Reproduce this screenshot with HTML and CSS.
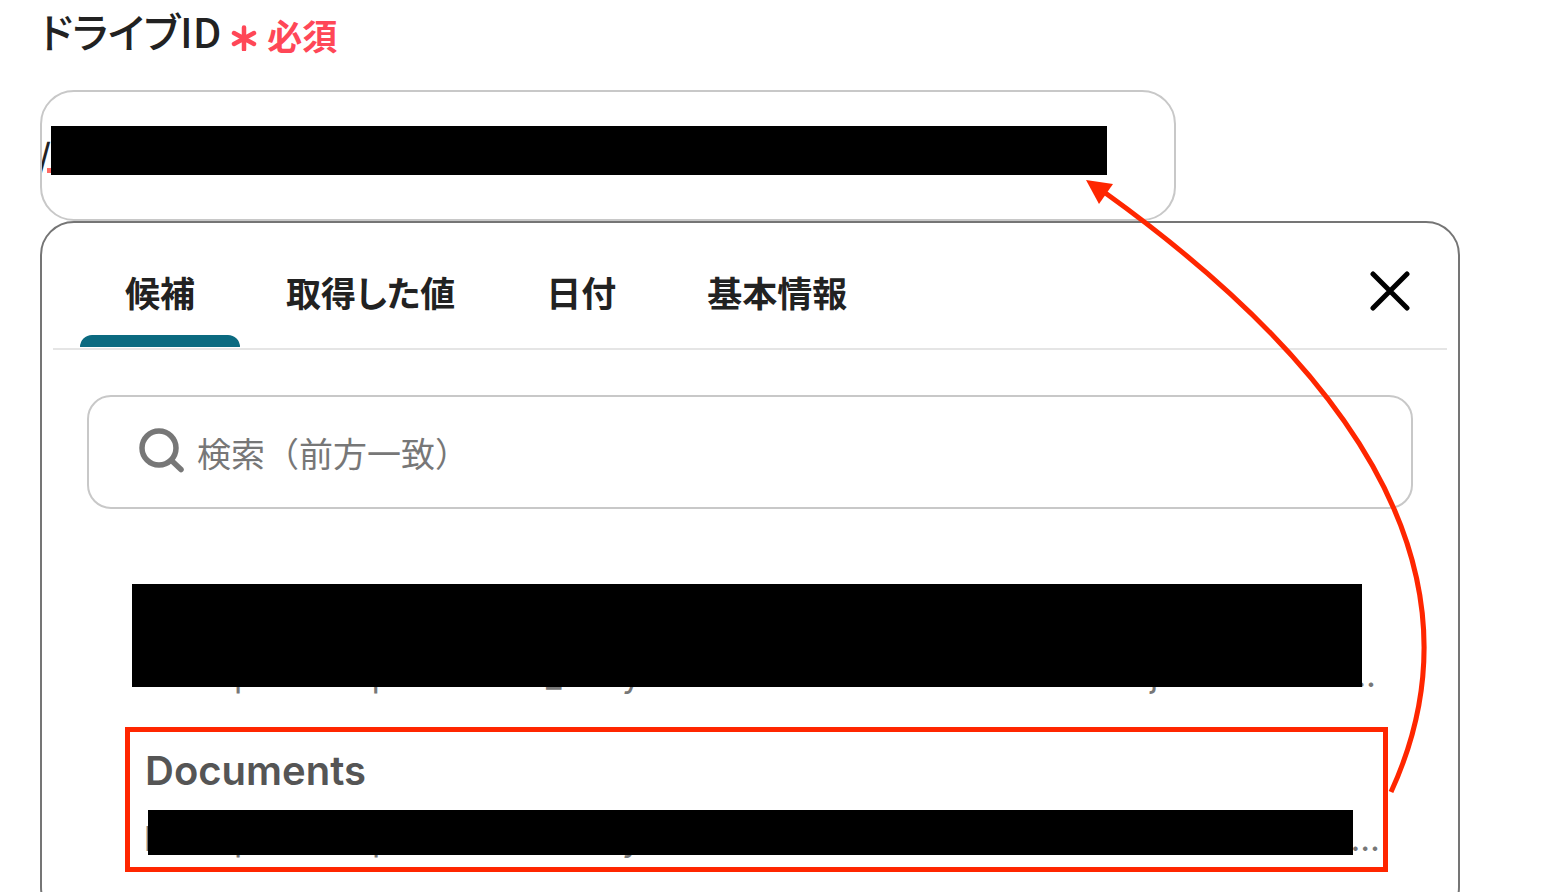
FILE: index.html
```html
<!DOCTYPE html>
<html lang="ja">
<head>
<meta charset="utf-8">
<title>ドライブID</title>
<link rel="stylesheet" href="styles.css">
</head>
<body>
<main class="page">
  <div class="label-row">
    <label class="label" for="drive-id">ドライブID</label>
    <span class="required">
      <svg class="required-icon" viewBox="0 0 26 26" aria-hidden="true"><path d="M13 2.500V24.500M3 8L23 19M23 8L3 19"/></svg>
      必須
    </span>
  </div>

  <div class="field">
    <input class="field-input" id="drive-id" type="text" value="/">
    <span class="spell-mark"></span>
    <span class="redaction redaction-field"></span>
  </div>

  <section class="panel">
    <div class="panel-head">
      <div class="tabs" role="tablist">
        <button class="tab tab-active" role="tab" aria-selected="true">候補</button>
        <button class="tab" role="tab">取得した値</button>
        <button class="tab" role="tab">日付</button>
        <button class="tab" role="tab">基本情報</button>
      </div>
      <button class="close" aria-label="閉じる">
        <svg viewBox="0 0 40 40" aria-hidden="true"><path d="M3 3L37 37M37 3L3 37"/></svg>
      </button>
    </div>

    <div class="search">
      <svg class="search-icon" viewBox="0 0 46 46" aria-hidden="true"><circle cx="20" cy="19" r="17"/><path d="M32.500 31.500L42 40.500"/></svg>
      <input class="search-input" type="text" placeholder="検索（前方一致）" aria-label="検索（前方一致）">
    </div>

    <ul class="options">
      <li class="option">
        <span class="option-title"></span>
        <span class="option-detail">
          <svg class="detail-text" aria-hidden="true"><text x="89" y="35">p</text><text x="214" y="35">q</text><text x="401" y="35">_</text><text x="477" y="35">y</text><text x="1005" y="35">j</text></svg>
          <span class="more more-inset">…</span>
        </span>
        <span class="redaction redaction-first"></span>
      </li>
      <li class="option">
        <button class="option-title">Documents</button>
        <span class="option-detail">
          <svg class="detail-text" aria-hidden="true"><text x="-1" y="35">b</text><text x="89" y="35">p</text><text x="227" y="35">p</text><text x="477" y="35">y</text></svg>
          <span class="more">…</span>
        </span>
        <span class="redaction redaction-second"></span>
        <span class="highlight"></span>
      </li>
    </ul>
  </section>

  <svg class="arrow" viewBox="0 0 350 620" aria-hidden="true">
    <path class="arrow-line" d="M311 614Q447 318 24 14"/>
    <path class="arrow-head" d="M6 2L33 6L19 26Z"/>
  </svg>
</main>
</body>
</html>
```
FILE: styles.css
```css
* {
  box-sizing: border-box;
}

body {
  margin: 0;
  background: #fff;
  color: #222;
  font-family: Inter, "Noto Sans CJK JP", sans-serif;
}

button,
input {
  margin: 0;
  padding: 0;
  border: 0;
  background: none;
  color: inherit;
  font: inherit;
}

.page {
  position: relative;
  height: 100vh;
  overflow: hidden;
  padding: 0 88px 0 40px;
}

.label-row {
  display: flex;
  align-items: center;
  gap: 10px;
  height: 90px;
  padding-bottom: 30px;
}

.label {
  font-family: "Noto Sans CJK JP", sans-serif;
  font-size: 41px;
  font-weight: 500;
  line-height: 60px;
  font-feature-settings: "palt";
}

.required {
  display: flex;
  align-items: center;
  gap: 10px;
  padding-top: 8px;
  color: #ff4757;
  font-size: 35px;
  font-weight: 700;
}

.required-icon {
  width: 26px;
  height: 26px;
  margin-top: 8px;
  fill: none;
  stroke: currentColor;
  stroke-width: 4.500;
  stroke-linecap: round;
}

.field {
  position: relative;
  width: 80%;
  height: 131px;
  border: 2px solid #c8c8c8;
  border-radius: 34px;
}

.field-input {
  width: 100%;
  height: 100%;
  font-size: 36px;
  text-indent: -4px;
}

.redaction {
  position: absolute;
  background: #000;
}

.spell-mark {
  position: absolute;
  left: 5px;
  top: 76px;
  width: 6px;
  height: 5px;
  background: #ff6b64;
}

.redaction-field {
  left: 9px;
  right: 67px;
  top: 34px;
  height: 49px;
}

.panel {
  height: 700px;
  border: 2px solid #757575;
  border-radius: 34px;
}

.panel-head {
  display: flex;
  justify-content: space-between;
  align-items: flex-start;
  height: 127px;
  margin: 0 11px;
  padding: 0 37px 0 27px;
  border-bottom: 2px solid #e5e5e5;
}

.tabs {
  display: flex;
  gap: 1px;
  height: 100%;
}

.tab {
  position: relative;
  padding: 18px 45px 6px;
  font-size: 35px;
  font-weight: 700;
  font-feature-settings: "palt";
}

.tab-active::after {
  content: "";
  position: absolute;
  left: 0;
  right: 0;
  bottom: 1px;
  height: 12px;
  border-radius: 12px 12px 0 0;
  background: #0b6a80;
}

.close {
  width: 40px;
  height: 40px;
  margin-top: 48px;
}

.close svg {
  display: block;
  fill: none;
  stroke: #000;
  stroke-width: 5;
  stroke-linecap: round;
}

.search {
  display: flex;
  align-items: center;
  gap: 12px;
  height: 114px;
  margin: 45px 45px 0;
  padding: 0 50px;
  border: 2px solid #c8c8c8;
  border-radius: 24px;
}

.search-icon {
  flex: none;
  width: 46px;
  height: 46px;
  overflow: visible;
  fill: none;
  stroke: #777;
  stroke-width: 5.500;
  stroke-linecap: round;
}

.search-input {
  flex: 1;
  height: 60px;
  font-family: "Noto Sans CJK JP", sans-serif;
  font-size: 34px;
}

.search-input::placeholder {
  color: #777;
  opacity: 1;
}

.options {
  display: flex;
  flex-direction: column;
  margin: 73px 78px 0 103px;
  padding: 0;
  list-style: none;
}

.option {
  position: relative;
  height: 164px;
}

.option-title {
  display: block;
  height: 70px;
  padding-bottom: 22px;
  color: #555;
  font-size: 40px;
  font-weight: 600;
  text-align: left;
}

.option-detail {
  display: flex;
  justify-content: flex-end;
  position: relative;
  height: 48px;
  color: #777;
  font-size: 34px;
  line-height: 46px;
}

.detail-text {
  position: absolute;
  inset: 0;
  width: 100%;
  height: 100%;
  fill: currentColor;
}

.more-inset {
  padding-right: 4px;
}

.redaction-first {
  left: -13px;
  right: 18px;
  top: 2px;
  height: 103px;
}

.redaction-second {
  left: 3px;
  right: 27px;
  top: 64px;
  height: 45px;
}

.highlight {
  position: absolute;
  left: -20px;
  right: -8px;
  top: -19px;
  height: 145px;
  border: 5px solid #ff2600;
}

.arrow {
  position: absolute;
  top: 178px;
  right: 118px;
  width: 350px;
  height: 620px;
}

.arrow-line {
  fill: none;
  stroke: #ff2600;
  stroke-width: 5;
}

.arrow-head {
  fill: #ff2600;
}
```
